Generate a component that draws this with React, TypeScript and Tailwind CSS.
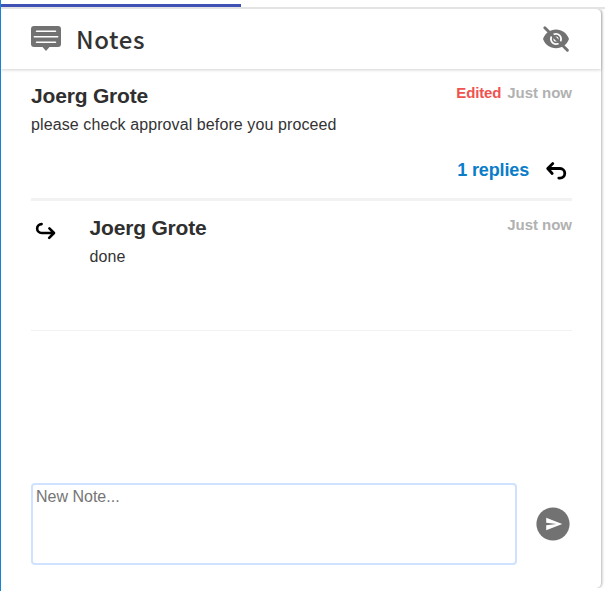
const NoteIcon = () => (
  <svg width="30" height="25" viewBox="0 0 30 25" className="block">
    <path d="M3 0H27Q30 0 30 3V18Q30 21 27 21H18.5L15 25L11.5 21H3Q0 21 0 18V3Q0 0 3 0Z" fill="#727272" />
    <path d="M5.5 5.2H24.5M3.3 10.8H26.7M5.5 16.2H24.5" stroke="#fff" strokeWidth="1.5" strokeLinecap="round" />
  </svg>
);

const HiddenIcon = () => (
  <svg width="28" height="28" viewBox="0 0 28 28" className="block">
    <path
      fillRule="evenodd"
      d="M1 14C3.2 8 8 4.6 14 4.6S24.8 8 27 14C24.8 20 20 23.2 14 23.2S3.2 20 1 14ZM14 7.9A6 6 0 1 0 14 19.9A6 6 0 1 0 14 7.9Z"
      fill="#727272"
    />
    <circle cx="14" cy="14" r="3.4" fill="none" stroke="#727272" strokeWidth="1.6" />
    <path d="M2.8 2.7L25.4 25.3" stroke="#727272" strokeWidth="2.9" strokeLinecap="round" />
  </svg>
);

const ReplyIcon = () => (
  <svg width="22" height="20" viewBox="0 0 22 20" className="mt-[3px] ml-4 block">
    <path
      d="M7.8 2.6L2.7 7.5L7.2 12.5M3.2 7.5H15A4.8 4.8 0 0 1 15 17.1H13.8"
      fill="none"
      stroke="#000"
      strokeWidth="2.8"
      strokeLinecap="round"
      strokeLinejoin="round"
    />
  </svg>
);

const ThreadIcon = () => (
  <svg width="22" height="20" viewBox="0 0 22 20" className="mt-[5px] ml-[3px] block">
    <path
      d="M15.4 7.4L20 12L15.2 16.8M19.5 12H7.6A4.45 4.45 0 0 1 7.6 3.1"
      fill="none"
      stroke="#000"
      strokeWidth="2.6"
      strokeLinecap="round"
      strokeLinejoin="round"
    />
  </svg>
);

const SendIcon = () => (
  <svg width="34" height="34" viewBox="0 0 34 34" className="block">
    <circle cx="17" cy="17" r="16.6" fill="#727272" />
    <path d="M10.2 10.8L26.3 17L10.2 23.2V18.3L20.5 17L10.2 15.7Z" fill="#fff" />
  </svg>
);

const Author = () => (
  <h2 className="text-[21px] leading-6 font-bold tracking-[-0.18px] text-[#2f2f2f]">Joerg Grote</h2>
);

export default function App() {
  return (
    <div className="flex h-[591px] w-[605px] flex-col overflow-hidden border-l border-[#1683d8] bg-white pt-1 font-['Liberation_Sans',Arial,sans-serif]">
      <div className="h-[3px] w-[240px] shrink-0 bg-[#3f51b5]" />
      <div className="h-0.5 shrink-0 bg-[#e3e3e3]" />
      <main className="flex h-[579px] w-[600px] shrink-0 flex-col rounded-r-[5px] bg-white shadow-[1px_0_3px_rgba(0,0,0,0.3)] [clip-path:inset(0_-5px_0_0)]">
        <header className="flex h-[60px] shrink-0 items-start pr-[31px] pl-[30px] shadow-[0_1px_3px_rgba(0,0,0,0.18)]">
          <div className="mt-[17px]"><NoteIcon /></div>
          <h1 className="mt-3 ml-[15px] flex-1 font-['Noto_Sans_CJK_SC',sans-serif] text-[24px] leading-9 font-medium tracking-[0.6px] text-[#333]">Notes</h1>
          <div className="mt-4"><HiddenIcon /></div>
        </header>

        <article className="mr-[29px] ml-[30px] flex h-[132px] shrink-0 flex-col border-b-[3px] border-[#f2f2f2] pt-[15px]">
          <div className="flex justify-between">
            <Author />
            <div className="flex gap-1.5 text-[15px] leading-[18px] font-bold tracking-[-0.03px] text-[#b1b1b1]">
              <span className="tracking-[-0.15px] text-[#ef5350]">Edited</span>
              <span>Just now</span>
            </div>
          </div>
          <p className="mt-[7px] text-base leading-5 tracking-[0.1px] text-[#333]">please check approval before you proceed</p>
          <div className="mt-[23px] flex items-start justify-end pr-[5px]">
            <span className="text-[18px] leading-6 font-bold tracking-[-0.15px] text-[#0a7dc9]">1 replies</span>
            <ReplyIcon />
          </div>
        </article>

        <article className="mr-[29px] ml-[30px] flex h-[130px] shrink-0 items-start border-b border-[#f2f2f2] pt-[15px]">
          <ThreadIcon />
          <div className="ml-[33.5px] flex-1">
            <Author />
            <p className="mt-[7px] text-base leading-5 tracking-[0.1px] text-[#333]">done</p>
          </div>
          <span className="text-[15px] leading-[18px] font-bold tracking-[-0.03px] text-[#b1b1b1]">Just now</span>
        </article>

        <footer className="mt-auto mr-[31px] mb-[23px] ml-[30px] flex items-center justify-between">
          <textarea
            placeholder="New Note..."
            className="block h-[82px] w-[486px] resize-none rounded border-2 border-[#cfe2ff] px-[3px] pt-[3px] pb-0 text-base leading-[18px] text-[#333] outline-none placeholder:text-[#757575]"
          />
          <button aria-label="Send note"><SendIcon /></button>
        </footer>
      </main>
    </div>
  );
}
